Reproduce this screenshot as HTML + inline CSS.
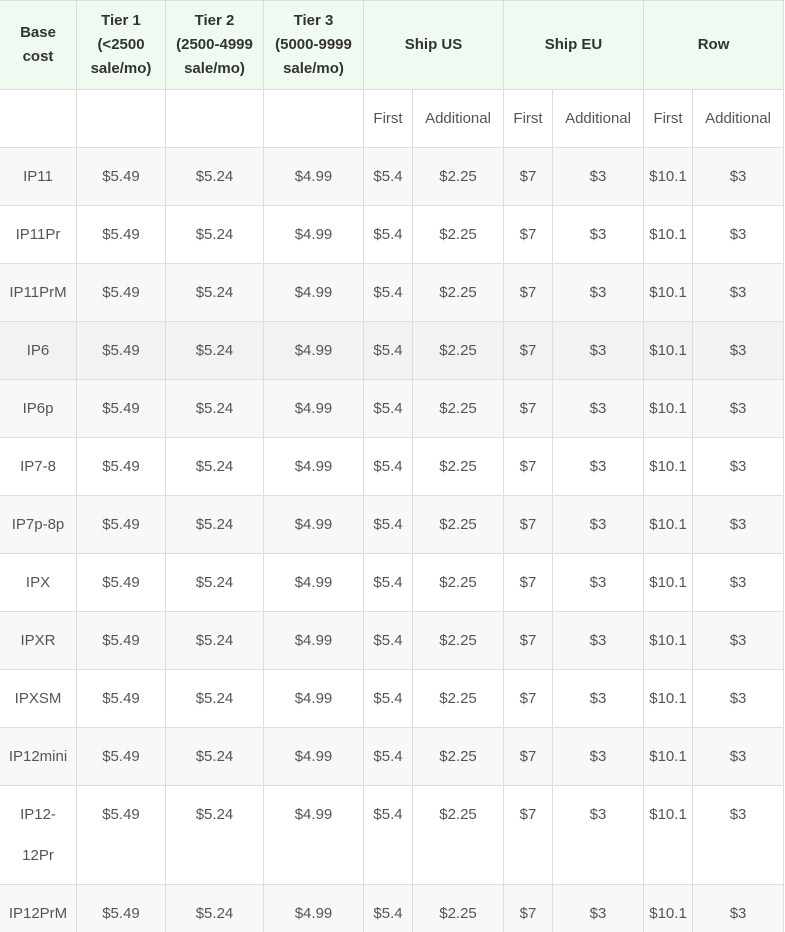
<!DOCTYPE html>
<html><head><meta charset="utf-8"><style>
html,body{margin:0;padding:0;background:#fff;width:785px;height:932px;overflow:hidden}
table{border-collapse:collapse;table-layout:fixed;width:784px;font-family:"Liberation Sans",sans-serif;font-size:15px;color:#555;margin-left:-1px}
td,th{border:1px solid #ddd;text-align:center;padding:8px 0;line-height:41px;vertical-align:top;white-space:nowrap;overflow:hidden}
th{background:#effbf0;color:#333;font-weight:bold;line-height:24px;vertical-align:middle;height:72px;font-size:15px}
tr.g td{background:#f8f8f8}
tr.h td{background:#f2f2f2}
</style></head><body>
<table>
<colgroup><col style="width:77px"><col style="width:89px"><col style="width:98px"><col style="width:100px"><col style="width:49px"><col style="width:91px"><col style="width:49px"><col style="width:91px"><col style="width:49px"><col style="width:91px"></colgroup>
<tr><th>Base<br>cost</th><th>Tier 1<br>(&lt;2500<br>sale/mo)</th><th>Tier 2<br>(2500-4999<br>sale/mo)</th><th>Tier 3<br>(5000-9999<br>sale/mo)</th><th colspan="2">Ship US</th><th colspan="2">Ship EU</th><th colspan="2">Row</th></tr>
<tr><td></td><td></td><td></td><td></td><td>First</td><td>Additional</td><td>First</td><td>Additional</td><td>First</td><td>Additional</td></tr>
<tr class="g"><td>IP11</td><td>$5.49</td><td>$5.24</td><td>$4.99</td><td>$5.4</td><td>$2.25</td><td>$7</td><td>$3</td><td>$10.1</td><td>$3</td></tr>
<tr><td>IP11Pr</td><td>$5.49</td><td>$5.24</td><td>$4.99</td><td>$5.4</td><td>$2.25</td><td>$7</td><td>$3</td><td>$10.1</td><td>$3</td></tr>
<tr class="g"><td>IP11PrM</td><td>$5.49</td><td>$5.24</td><td>$4.99</td><td>$5.4</td><td>$2.25</td><td>$7</td><td>$3</td><td>$10.1</td><td>$3</td></tr>
<tr class="h"><td>IP6</td><td>$5.49</td><td>$5.24</td><td>$4.99</td><td>$5.4</td><td>$2.25</td><td>$7</td><td>$3</td><td>$10.1</td><td>$3</td></tr>
<tr class="g"><td>IP6p</td><td>$5.49</td><td>$5.24</td><td>$4.99</td><td>$5.4</td><td>$2.25</td><td>$7</td><td>$3</td><td>$10.1</td><td>$3</td></tr>
<tr><td>IP7-8</td><td>$5.49</td><td>$5.24</td><td>$4.99</td><td>$5.4</td><td>$2.25</td><td>$7</td><td>$3</td><td>$10.1</td><td>$3</td></tr>
<tr class="g"><td>IP7p-8p</td><td>$5.49</td><td>$5.24</td><td>$4.99</td><td>$5.4</td><td>$2.25</td><td>$7</td><td>$3</td><td>$10.1</td><td>$3</td></tr>
<tr><td>IPX</td><td>$5.49</td><td>$5.24</td><td>$4.99</td><td>$5.4</td><td>$2.25</td><td>$7</td><td>$3</td><td>$10.1</td><td>$3</td></tr>
<tr class="g"><td>IPXR</td><td>$5.49</td><td>$5.24</td><td>$4.99</td><td>$5.4</td><td>$2.25</td><td>$7</td><td>$3</td><td>$10.1</td><td>$3</td></tr>
<tr><td>IPXSM</td><td>$5.49</td><td>$5.24</td><td>$4.99</td><td>$5.4</td><td>$2.25</td><td>$7</td><td>$3</td><td>$10.1</td><td>$3</td></tr>
<tr class="g"><td>IP12mini</td><td>$5.49</td><td>$5.24</td><td>$4.99</td><td>$5.4</td><td>$2.25</td><td>$7</td><td>$3</td><td>$10.1</td><td>$3</td></tr>
<tr><td>IP12-<br>12Pr</td><td>$5.49</td><td>$5.24</td><td>$4.99</td><td>$5.4</td><td>$2.25</td><td>$7</td><td>$3</td><td>$10.1</td><td>$3</td></tr>
<tr class="g"><td>IP12PrM</td><td>$5.49</td><td>$5.24</td><td>$4.99</td><td>$5.4</td><td>$2.25</td><td>$7</td><td>$3</td><td>$10.1</td><td>$3</td></tr>
</table>
</body></html>
